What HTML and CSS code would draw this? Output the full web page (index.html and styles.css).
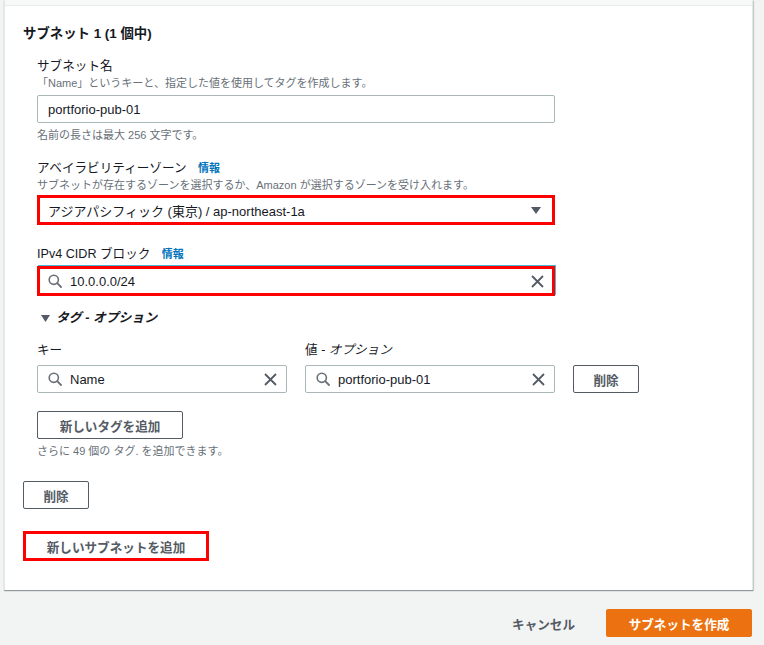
FILE: index.html
```html
<!DOCTYPE html>
<html lang="ja">
<head>
    <meta charset="UTF-8">
    <meta name="viewport" content="width=device-width, initial-scale=1.0">
    <title>サブネットを作成</title>
    <link rel="stylesheet" href="styles.css">
</head>
<body>
    <div class="card">
        <div class="card-top"></div>
        <div class="card-body">
            <h2 class="title">サブネット 1 (1 個中)</h2>
            <div class="subnet">
                <div class="field">
                    <div class="label">サブネット名</div>
                    <div class="desc">「Name」というキーと、指定した値を使用してタグを作成します。</div>
                    <div class="input"><span class="value">portforio-pub-01</span></div>
                    <div class="hint">名前の長さは最大 256 文字です。</div>
                </div>

                <div class="field field-az">
                    <div class="label">アベイラビリティーゾーン <a class="info">情報</a></div>
                    <div class="desc">サブネットが存在するゾーンを選択するか、Amazon が選択するゾーンを受け入れます。</div>
                    <div class="input marked select">
                        <span class="value">アジアパシフィック (東京) / ap-northeast-1a</span>
                        <svg class="caret" width="10" height="7" viewBox="0 0 10 7"><path d="M0 0h10L5 7z" fill="#545b64"/></svg>
                    </div>
                </div>

                <div class="field field-cidr">
                    <div class="label">IPv4 CIDR ブロック <a class="info">情報</a></div>
                    <div class="input marked focused">
                        <svg class="search" width="14" height="14" viewBox="0 0 14 14"><circle cx="5.8" cy="5.8" r="4.6" fill="none" stroke="#687078" stroke-width="1.6"/><path d="M9.2 9.2L13 13" stroke="#687078" stroke-width="1.8" stroke-linecap="round"/></svg>
                        <span class="value">10.0.0.0/24</span>
                        <svg class="clear" width="13" height="13" viewBox="0 0 13 13"><path d="M1 1l11 11M12 1L1 12" stroke="#545b64" stroke-width="1.8"/></svg>
                    </div>
                </div>

                <div class="tags">
                    <div class="tags-head">
                        <svg class="arrow" width="9" height="7" viewBox="0 0 9 7"><path d="M0 0h9L4.5 7z" fill="#545b64"/></svg>
                        タグ - オプション
                    </div>
                    <div class="tag-row">
                        <div class="tag-col">
                            <div class="label">キー</div>
                            <div class="input">
                                <svg class="search" width="14" height="14" viewBox="0 0 14 14"><circle cx="5.8" cy="5.8" r="4.6" fill="none" stroke="#687078" stroke-width="1.6"/><path d="M9.2 9.2L13 13" stroke="#687078" stroke-width="1.8" stroke-linecap="round"/></svg>
                                <span class="value">Name</span>
                                <svg class="clear" width="13" height="13" viewBox="0 0 13 13"><path d="M1 1l11 11M12 1L1 12" stroke="#545b64" stroke-width="1.8"/></svg>
                            </div>
                        </div>
                        <div class="tag-col">
                            <div class="label">値 <i>- オプション</i></div>
                            <div class="input">
                                <svg class="search" width="14" height="14" viewBox="0 0 14 14"><circle cx="5.8" cy="5.8" r="4.6" fill="none" stroke="#687078" stroke-width="1.6"/><path d="M9.2 9.2L13 13" stroke="#687078" stroke-width="1.8" stroke-linecap="round"/></svg>
                                <span class="value">portforio-pub-01</span>
                                <svg class="clear" width="13" height="13" viewBox="0 0 13 13"><path d="M1 1l11 11M12 1L1 12" stroke="#545b64" stroke-width="1.8"/></svg>
                            </div>
                        </div>
                        <button class="btn btn-small">削除</button>
                    </div>
                    <button class="btn add-tag">新しいタグを追加</button>
                    <div class="hint">さらに 49 個の タグ. を追加できます。</div>
                </div>
            </div>

            <button class="btn btn-small remove">削除</button>
            <button class="btn btn-link marked">新しいサブネットを追加</button>
        </div>
    </div>

    <div class="footer">
        <button class="btn btn-link cancel">キャンセル</button>
        <button class="btn btn-primary">サブネットを作成</button>
    </div>
</body>
</html>
```

FILE: styles.css
```css
* {
    margin: 0;
    padding: 0;
    box-sizing: border-box;
}
html, body {
    height: 100%;
}
body {
    background: #f2f3f3;
    font-family: "Liberation Sans", "Noto Sans CJK JP", sans-serif;
    color: #16191f;
    font-size: 12.6px;
}
.card {
    margin-left: 4px;
    width: 749px;
    background: #fff;
    border-left: 1px solid #e4e7e7;
    border-right: 1px solid #e4e7e7;
    box-shadow: 0 1px 1px 0 rgba(0, 28, 36, 0.3), 1px 1px 1px 0 rgba(0, 28, 36, 0.15);
}
.card-top {
    height: 6px;
    background: #f7f8f8;
    border-bottom: 1px solid #e9ebeb;
}
.card-body {
    padding: 18px 18px 29px;
}
.title {
    font-size: 13.4px;
    font-weight: bold;
    line-height: 19px;
}
.subnet {
    padding-left: 14px;
    padding-top: 14px;
}
.field {
    margin-bottom: 16px;
}
.field-az {
    margin-bottom: 20px;
}
.field-cidr {
    margin-bottom: 13px;
}
.label {
    font-size: 12.6px;
    line-height: 18px;
}
.label i {
    font-style: italic;
}
.info {
    color: #0073bb;
    font-weight: bold;
    font-size: 11px;
    margin-left: 8px;
}
.desc, .hint {
    font-size: 11px;
    line-height: 16px;
    color: #687078;
}
.hint {
    margin-top: 4px;
}
.input {
    display: flex;
    align-items: center;
    width: 518px;
    height: 28px;
    margin-top: 4px;
    padding: 0 9px 0 10px;
    border: 1px solid #aab7b8;
    border-radius: 2px;
    font-size: 13px;
    background: #fff;
}
.input.marked {
    height: 30px;
    margin-top: 3px;
    padding: 0 8px;
    border: 3px solid #f00;
    border-radius: 0;
}
.input.select {
    margin-top: 2px;
}
.input.focused {
    box-shadow: 1px -1px 0 #44b9d6;
}
.value {
    flex: 1;
}
.search {
    margin-right: 8px;
}
.caret {
    margin-right: 3px;
}
.tags-head {
    display: flex;
    align-items: center;
    gap: 6px;
    font-weight: bold;
    font-style: italic;
    line-height: 18px;
    font-size: 12.8px;
    padding-left: 4px;
}
.arrow {
    flex: none;
}
.tag-row {
    display: flex;
    align-items: flex-end;
    gap: 18px;
    margin-top: 14px;
}
.tag-col .input {
    width: 250px;
    margin-top: 6px;
}
.btn {
    display: block;
    height: 28px;
    padding: 0 18px;
    background: #fff;
    border: 1px solid #545b64;
    border-radius: 2px;
    font-family: inherit;
    font-size: 12.6px;
    font-weight: bold;
    color: #545b64;
}
.btn-small {
    width: 66px;
    padding: 0;
}
.add-tag {
    margin-top: 18px;
    width: 146px;
    padding: 0;
}
.remove {
    margin-top: 22px;
}
.btn-link {
    border-color: transparent;
}
.btn.marked {
    margin-top: 22px;
    height: 30px;
    width: 186px;
    padding: 0;
    border: 3px solid #f00;
    border-radius: 0;
}
.footer {
    display: flex;
    justify-content: flex-end;
    gap: 10px;
    margin-top: 19px;
    padding-right: 12px;
}
.cancel {
    background: transparent;
    padding: 0 20px;
}
.btn-primary {
    width: 146px;
    padding: 0;
    background: #ec7211;
    border-color: #ec7211;
    color: #fff;
}
```
